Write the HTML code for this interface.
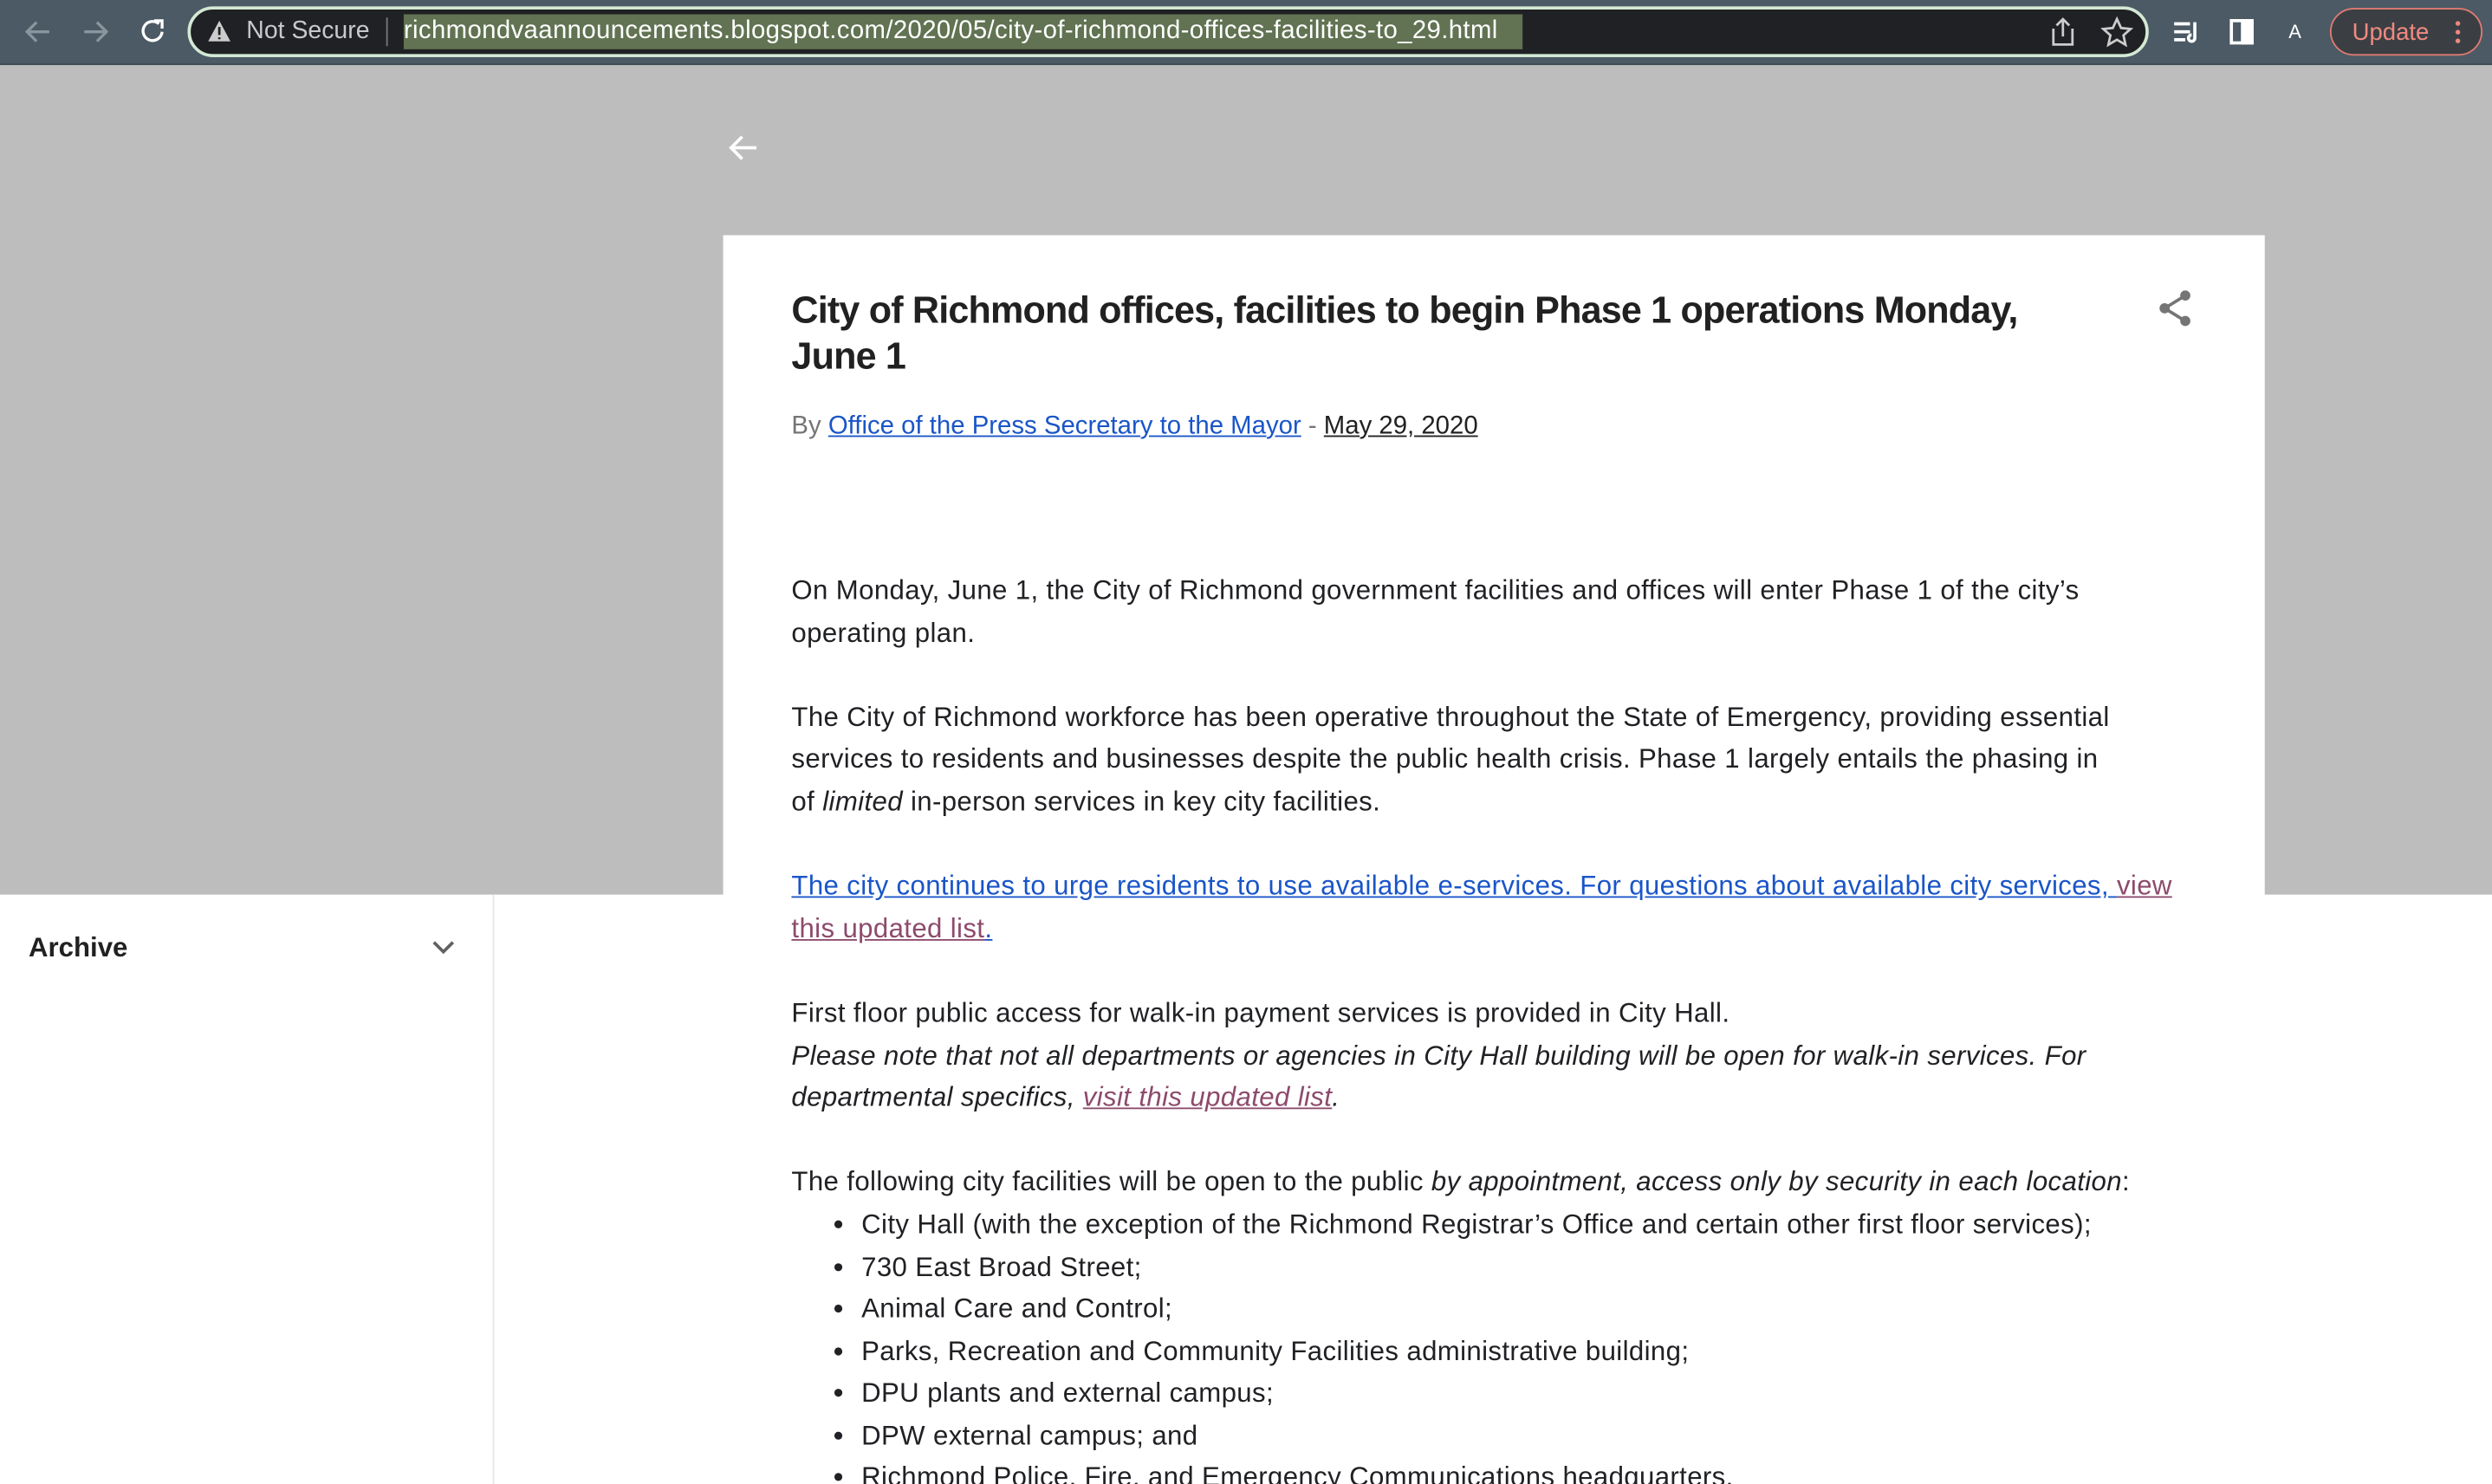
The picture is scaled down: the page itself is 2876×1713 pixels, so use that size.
<!DOCTYPE html>
<html><head><meta charset="utf-8"><style>
html,body{margin:0;padding:0;width:2876px;height:1712px;overflow:hidden;background:#fff}
#w{position:absolute;left:0;top:0;width:1568px;height:934px;transform:scale(1.8342);transform-origin:0 0;font-family:"Liberation Sans",Arial,sans-serif;overflow:hidden}
.abs{position:absolute}
#tb{left:0;top:0;width:1568px;height:40px;background:#4b5a65;border-bottom:1px solid #3c4850}
#omni{left:118px;top:4px;width:1230px;height:28px;background:#202124;border:2px solid #d3e9d4;border-radius:17px}
#gray{left:0;top:41px;width:1568px;height:522px;background:#bdbdbd}
#card{left:455px;top:148px;width:970px;height:800px;background:#fff}
.t{white-space:nowrap}
.body{left:498px;font-size:17px;line-height:26.6px;color:#202124;white-space:nowrap;letter-spacing:0.2px}
.body p{margin:0 0 26.6px 0}
a{color:#1a55c8;text-decoration:underline}
a.v{color:#8d4a6c}
ul{margin:0;padding-left:44px}
li{margin:0}
</style></head><body><div id="w">
<div id="tb" class="abs"></div>
<svg class="abs" style="left:14px;top:10px" width="100" height="20" viewBox="0 0 100 20" fill="none" stroke-width="1.8">
<path d="M17 10H3M9 4L3 10l6 6" stroke="#8a959d"/>
<path d="M39 10h14M47 4l6 6-6 6" stroke="#8a959d"/>
<path d="M86 5a6 6 0 1 0 2 5" stroke="#fff"/><path d="M83 3h5v5" stroke="#fff"/>
</svg>
<div id="omni" class="abs"></div>
<svg class="abs" style="left:130px;top:12px" width="16" height="15"><path d="M8 1L15 14H1Z" fill="#ccc"/><path d="M8 5v5M8 11.5v1.2" stroke="#202124" stroke-width="1.5"/></svg>
<div class="abs t" style="left:155px;top:11px;font-size:15.5px;color:#c7c9cc">Not Secure</div>
<div class="abs" style="left:243px;top:11px;width:1px;height:18px;background:#777"></div>
<div class="abs t" style="left:254px;top:9px;height:22px;width:704px;background:#617352;font-size:16px;line-height:22px;color:#fff;letter-spacing:0.2px">richmondvaannouncements.blogspot.com/2020/05/city-of-richmond-offices-facilities-to_29.html</div>
<svg class="abs" style="left:1288px;top:10px" width="56" height="20" fill="none" stroke="#ccc" stroke-width="1.5">
<path d="M4 8v10h12V8M10 2v11M6 6l4-4 4 4"/><path d="M44 2l2.6 5.6 6 .6-4.5 4 1.3 6-5.4-3.2-5.4 3.2 1.3-6-4.5-4 6-.6z"/></svg>
<svg class="abs" style="left:1366px;top:10px" width="90" height="20" fill="none" stroke="#fff" stroke-width="2">
<path d="M2 5h10M2 10h10M2 15h7M15 4v10a2 2 0 1 1-2-2"/><rect x="38" y="3" width="13" height="14"/><rect x="45" y="3" width="6" height="14" fill="#fff"/></svg>
<div class="abs t" style="left:1440px;top:13px;font-size:12px;color:#fff">A</div>
<div class="abs" style="left:1466px;top:5px;width:94px;height:28px;border:1.5px solid #e07b72;border-radius:16px;background:#3b3f44"></div>
<div class="abs t" style="left:1480px;top:12px;font-size:15px;color:#f08a80">Update</div>
<div class="abs" style="left:1545px;top:12px;width:3px;height:16px;background:radial-gradient(circle,#f08a80 1.3px,transparent 1.6px) 0 0/3px 5.5px"></div>
<div id="gray" class="abs"></div>
<svg class="abs" style="left:458px;top:84px" width="20" height="18" fill="none" stroke="#fff" stroke-width="2"><path d="M18 9H2M9 2L2 9l7 7"/></svg>
<div id="card" class="abs"></div>
<div class="abs" style="left:498px;top:181px;font-size:23.5px;line-height:29px;font-weight:bold;color:#212121;white-space:nowrap;letter-spacing:-0.45px">City of Richmond offices, facilities to begin Phase 1 operations Monday,<br>June 1</div>
<svg class="abs" style="left:1357px;top:182px" width="24" height="24" fill="#757575"><circle cx="18" cy="4" r="3.2"/><circle cx="5" cy="12" r="3.2"/><circle cx="18" cy="20" r="3.2"/><path d="M18 4L5 12l13 8" stroke="#757575" stroke-width="2" fill="none"/></svg>
<div class="abs t" style="left:498px;top:260px;font-size:16px;color:#757575">By <a href="#" style="color:#1a55c8">Office of the Press Secretary to the Mayor</a> - <a href="#" style="color:#212121">May 29, 2020</a></div>
<div class="abs body" style="top:359px">
<p>On Monday, June 1, the City of Richmond government facilities and offices will enter Phase 1 of the city’s<br>operating plan.</p>
<p>The City of Richmond workforce has been operative throughout the State of Emergency, providing essential<br>services to residents and businesses despite the public health crisis. Phase 1 largely entails the phasing in<br>of <i>limited</i> in-person services in key city facilities.</p>
<p><a href="#">The city continues to urge residents to use available e-services. For questions about available city services, </a><a href="#" class="v">view<br>this updated list</a><a href="#">.</a></p>
<p>First floor public access for walk-in payment services is provided in City Hall.<br><i>Please note that not all departments or agencies in City Hall building will be open for walk-in services. For<br>departmental specifics, <a href="#" class="v">visit this updated list</a>.</i></p>
<div>The following city facilities will be open to the public <i>by appointment, access only by security in each location</i>:</div>
<ul>
<li>City Hall (with the exception of the Richmond Registrar’s Office and certain other first floor services);</li>
<li>730 East Broad Street;</li>
<li>Animal Care and Control;</li>
<li>Parks, Recreation and Community Facilities administrative building;</li>
<li>DPU plants and external campus;</li>
<li>DPW external campus; and</li>
<li>Richmond Police, Fire, and Emergency Communications headquarters.</li>
</ul>
</div>
<div class="abs" style="left:310px;top:563px;width:1px;height:380px;background:#e6e6e6"></div>
<div class="abs t" style="left:18px;top:587px;font-size:17px;font-weight:bold;color:#212121">Archive</div>
<svg class="abs" style="left:271px;top:590px" width="16" height="12" fill="none" stroke="#616161" stroke-width="2"><path d="M2 3l6 6 6-6"/></svg>
</div></body></html>
